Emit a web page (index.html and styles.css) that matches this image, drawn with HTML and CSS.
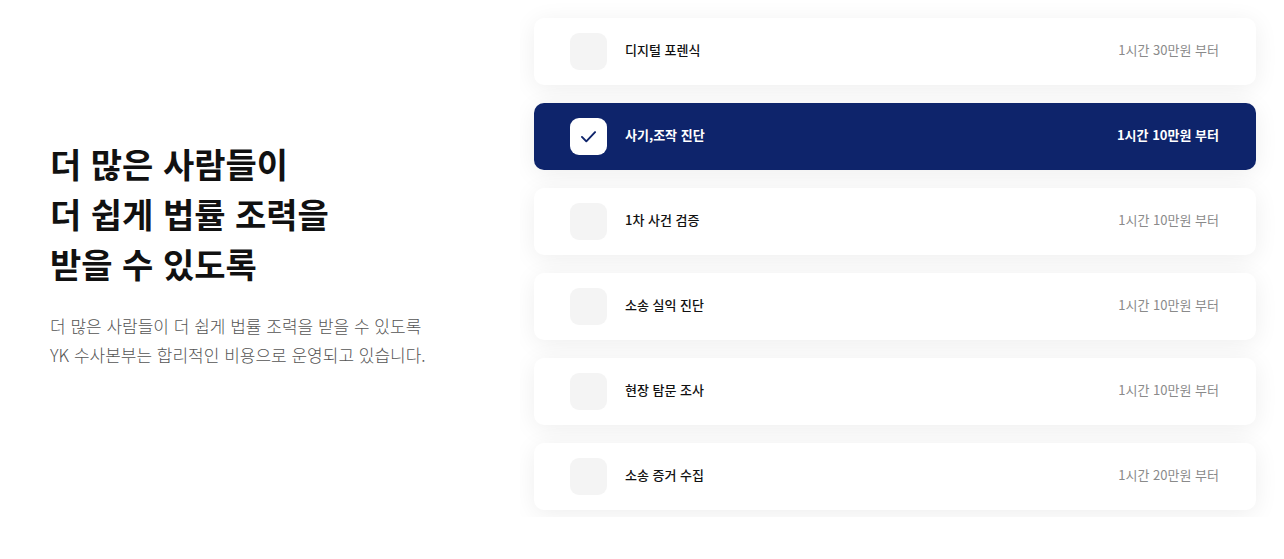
FILE: index.html
```html
<!DOCTYPE html>
<html lang="ko">
<head>
<meta charset="utf-8">
<title>요금 안내</title>
<link rel="stylesheet" href="styles.css">
</head>
<body>
<main class="page">
  <section class="intro">
    <h2 class="intro-title">더 많은 사람들이<br>더 쉽게 법률 조력을<br>받을 수 있도록</h2>
    <p class="intro-desc">더 많은 사람들이 더 쉽게 법률 조력을 받을 수 있도록<br>YK 수사본부는 합리적인 비용으로 운영되고 있습니다.</p>
  </section>
  <section class="list-wrap">
    <ul class="list">
      <li class="item">
        <span class="check"></span>
        <span class="name">디지털 포렌식</span>
        <span class="price">1시간 30만원 부터</span>
      </li>
      <li class="item active">
        <span class="check">
          <svg viewBox="0 0 24 24" width="21" height="21" aria-hidden="true"><path d="M4.5 12.5l5 5L19.5 7" fill="none" stroke="#0e246b" stroke-width="2.2" stroke-linecap="round" stroke-linejoin="round"/></svg>
        </span>
        <span class="name">사기,조작 진단</span>
        <span class="price">1시간 10만원 부터</span>
      </li>
      <li class="item">
        <span class="check"></span>
        <span class="name">1차 사건 검증</span>
        <span class="price">1시간 10만원 부터</span>
      </li>
      <li class="item">
        <span class="check"></span>
        <span class="name">소송 실익 진단</span>
        <span class="price">1시간 10만원 부터</span>
      </li>
      <li class="item">
        <span class="check"></span>
        <span class="name">현장 탐문 조사</span>
        <span class="price">1시간 10만원 부터</span>
      </li>
      <li class="item">
        <span class="check"></span>
        <span class="name">소송 증거 수집</span>
        <span class="price">1시간 20만원 부터</span>
      </li>
    </ul>
  </section>
</main>
</body>
</html>
```

FILE: styles.css
```css
* { box-sizing: border-box; }
html, body { margin: 0; padding: 0; background: #fff; }
body {
  font-family: "Noto Sans CJK KR", "Noto Sans", sans-serif;
  color: #111;
  width: 1284px;
  height: 559px;
  overflow: hidden;
}
.page {
  display: flex;
  align-items: flex-start;
}
.intro {
  width: 520px;
  padding: 139px 0 0 50px;
  flex-shrink: 0;
}
.intro-title {
  margin: 0;
  font-size: 34px;
  line-height: 50px;
  font-weight: 700;
  color: #111;
}
.intro-desc {
  margin: 22px 0 0;
  font-size: 17px;
  line-height: 29px;
  font-weight: 300;
  color: #555;
}
.list-wrap {
  flex: 1;
  height: 517px;
  overflow: hidden;
  padding: 18px 28px 0 14px;
}
.list {
  list-style: none;
  margin: 0;
  padding: 0;
  display: flex;
  flex-direction: column;
  gap: 18px;
}
.item {
  height: 67px;
  background: #fff;
  border-radius: 10px;
  box-shadow: 0 4px 24px rgba(0, 0, 0, 0.07);
  display: flex;
  align-items: center;
  padding: 0 37px 0 36px;
}
.check {
  width: 37px;
  height: 37px;
  border-radius: 9px;
  background: #f4f4f4;
  display: flex;
  align-items: center;
  justify-content: center;
  flex-shrink: 0;
}
.name {
  margin-left: 18px;
  font-size: 13px;
  line-height: 20px;
  padding-bottom: 3px;
  font-weight: 500;
  color: #111;
  flex: 1;
}
.price {
  font-size: 13px;
  line-height: 20px;
  padding-bottom: 3px;
  font-weight: 400;
  color: #8a8a8a;
}
.item.active {
  background: #0e246b;
}
.item.active .check { background: #fff; }
.item.active .name { color: #fff; font-weight: 700; }
.item.active .price { color: #fff; font-weight: 700; }
```
